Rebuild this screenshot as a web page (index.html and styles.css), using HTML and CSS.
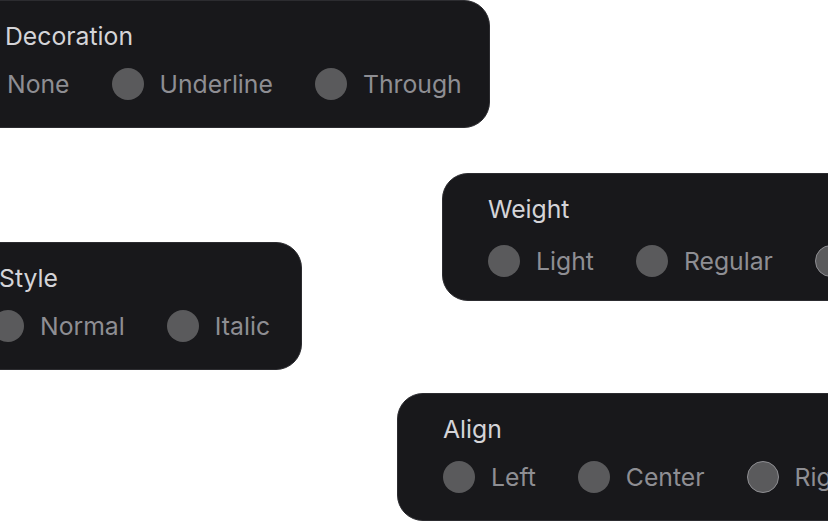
FILE: index.html
```html
<!DOCTYPE html>
<html lang="en">
<head>
<meta charset="utf-8">
<title>Text options</title>
<link rel="stylesheet" href="styles.css">
</head>
<body>
<main class="canvas">
  <section class="card card-decoration">
    <div class="card-label">Decoration</div>
    <div class="options options-decoration">
      <label class="option"><span class="radio"></span><span class="option-text">None</span></label>
      <label class="option"><span class="radio"></span><span class="option-text">Underline</span></label>
      <label class="option"><span class="radio"></span><span class="option-text">Through</span></label>
    </div>
  </section>

  <section class="card card-weight">
    <div class="card-label">Weight</div>
    <div class="options">
      <label class="option"><span class="radio"></span><span class="option-text">Light</span></label>
      <label class="option"><span class="radio"></span><span class="option-text">Regular</span></label>
      <label class="option"><span class="radio radio-hover"></span><span class="option-text">Bold</span></label>
    </div>
  </section>

  <section class="card card-style">
    <div class="card-label">Style</div>
    <div class="options options-style">
      <label class="option"><span class="radio"></span><span class="option-text">Normal</span></label>
      <label class="option"><span class="radio"></span><span class="option-text">Italic</span></label>
    </div>
  </section>

  <section class="card card-align">
    <div class="card-label">Align</div>
    <div class="options">
      <label class="option"><span class="radio"></span><span class="option-text">Left</span></label>
      <label class="option"><span class="radio"></span><span class="option-text">Center</span></label>
      <label class="option"><span class="radio radio-hover"></span><span class="option-text">Right</span></label>
    </div>
  </section>
</main>
</body>
</html>
```

FILE: styles.css
```css
* {
  box-sizing: border-box;
}

html, body {
  margin: 0;
  padding: 0;
  background: #ffffff;
}

body {
  font-family: Inter, "Noto Sans", "Liberation Sans", sans-serif;
  overflow: hidden;
}

.canvas {
  position: relative;
  width: 828px;
  height: 522px;
  overflow: hidden;
}

.card {
  position: absolute;
  display: flex;
  flex-direction: column;
  gap: 16px;
  padding: 19px 31px 27px 45px;
  background: #18181b;
  border: 1px solid #2c2c30;
  border-radius: 26px;
  white-space: nowrap;
}

.card-decoration {
  left: -41px;
  top: 0;
  padding-right: 27px;
}

.card-weight {
  left: 442px;
  top: 173px;
  gap: 20px;
  padding-bottom: 23px;
}

.card-style {
  left: -47px;
  top: 242px;
}

.card-align {
  left: 397px;
  top: 393px;
}

.card-label {
  font-size: 24.75px;
  line-height: 32px;
  color: #d4d4d8;
}

.options {
  display: flex;
  align-items: center;
  gap: 42px;
}

.options-decoration {
  margin-left: -46px;
}

.options-style {
  margin-left: -7px;
}

.option {
  display: flex;
  align-items: center;
  gap: 16px;
}

.radio {
  width: 32px;
  height: 32px;
  border-radius: 50%;
  background: #5a5a5c;
  flex: none;
}

.radio-hover {
  border: 1px solid #8e8e92;
}

.option-text {
  font-size: 24.75px;
  line-height: 32px;
  color: #8e8e93;
}
```
